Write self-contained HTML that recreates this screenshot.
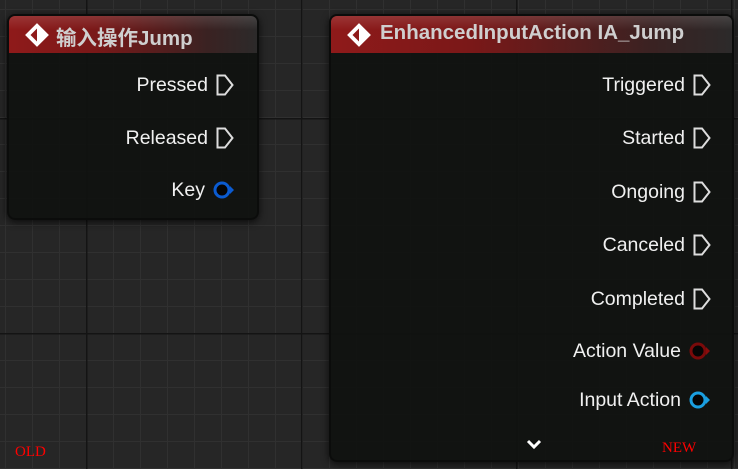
<!DOCTYPE html>
<html><head><meta charset="utf-8"><style>
*{margin:0;padding:0;box-sizing:border-box}
body{width:738px;height:469px;overflow:hidden;background-color:#262626;position:relative;font-family:"Liberation Sans","Noto Sans CJK SC",sans-serif;
background-image:
linear-gradient(to right,#141414 0,#141414 1.5px,transparent 1.5px),
linear-gradient(to bottom,#141414 0,#141414 1.5px,transparent 1.5px),
linear-gradient(to right,#303030 0,#303030 1px,transparent 1px),
linear-gradient(to bottom,#303030 0,#303030 1px,transparent 1px);
background-size:215px 215px,215px 215px,27px 27px,27px 27px;
background-position:86px 333px,86px 333px,86px 333px,86px 333px;}
.node{position:absolute;background:rgba(17,19,17,0.96);border-radius:8px;box-shadow:0 2px 8px rgba(0,0,0,0.7);border:2px solid #0b0c0b}
.hdr{position:absolute;left:0;right:0;top:0;height:37px;border-radius:6px 6px 0 0;background:linear-gradient(to right,#8f1a1a 0%,#7a1818 35%,#3a2222 80%,#2c2a2a 100%);}
.hdr::before{content:"";position:absolute;left:0;right:0;top:0;height:14px;border-radius:6px 6px 0 0;background:linear-gradient(to bottom,rgba(255,255,255,0.12),transparent)}
.ttl{position:absolute;left:47px;top:5px;color:#cfcfcf;font-weight:bold;font-size:20.5px;white-space:nowrap}
.ico{position:absolute;left:15px;top:6px}
.row{position:absolute;right:0;height:24px;display:flex;align-items:center;color:#f0f0f0;font-size:19.5px;white-space:nowrap}
.row svg{margin-left:8px}
.lbl{position:absolute;color:#ff0000;font-family:"Liberation Serif",serif;font-size:15px}
</style></head><body>
<div class="node" style="left:7px;top:14px;width:252px;height:206px">
 <div class="hdr"><svg class="ico" width="26" height="26" viewBox="0 0 24 24"><path d="M12 1 L23 12 L12 23 L1 12 Z" fill="#fff"/><path d="M12 6 L12 18 L6 12 Z" fill="#8f1a1a"/></svg><div class="ttl">输入操作Jump</div></div>
 <div class="row" style="top:57px;right:23px">Pressed<svg width="18" height="22" viewBox="0 0 18 22"><path d="M1.5 1.5 H9 L16.5 11 L9 20.5 H1.5 Z" fill="none" stroke="#ddd" stroke-width="2"/></svg></div>
 <div class="row" style="top:110px;right:23px">Released<svg width="18" height="22" viewBox="0 0 18 22"><path d="M1.5 1.5 H9 L16.5 11 L9 20.5 H1.5 Z" fill="none" stroke="#ddd" stroke-width="2"/></svg></div>
 <div class="row" style="top:162px;right:22px">Key<svg width="22" height="20" viewBox="0 0 22 20"><circle cx="9" cy="10" r="7" fill="#050505" stroke="#0b5bd0" stroke-width="3"/><path d="M17 6 L21 10 L17 14 Z" fill="#0b5bd0"/></svg></div>
</div>
<div class="node" style="left:329px;top:14px;width:405px;height:448px">
 <div class="hdr"><svg class="ico" width="26" height="26" viewBox="0 0 24 24"><path d="M12 1 L23 12 L12 23 L1 12 Z" fill="#fff"/><path d="M12 6 L12 18 L6 12 Z" fill="#8f1a1a"/></svg><div class="ttl" style="left:49px">EnhancedInputAction IA_Jump</div></div>
 <div class="row" style="top:57px;right:21px">Triggered<svg width="18" height="22" viewBox="0 0 18 22"><path d="M1.5 1.5 H9 L16.5 11 L9 20.5 H1.5 Z" fill="none" stroke="#ddd" stroke-width="2"/></svg></div>
 <div class="row" style="top:110px;right:21px">Started<svg width="18" height="22" viewBox="0 0 18 22"><path d="M1.5 1.5 H9 L16.5 11 L9 20.5 H1.5 Z" fill="none" stroke="#ddd" stroke-width="2"/></svg></div>
 <div class="row" style="top:164px;right:21px">Ongoing<svg width="18" height="22" viewBox="0 0 18 22"><path d="M1.5 1.5 H9 L16.5 11 L9 20.5 H1.5 Z" fill="none" stroke="#ddd" stroke-width="2"/></svg></div>
 <div class="row" style="top:217px;right:21px">Canceled<svg width="18" height="22" viewBox="0 0 18 22"><path d="M1.5 1.5 H9 L16.5 11 L9 20.5 H1.5 Z" fill="none" stroke="#ddd" stroke-width="2"/></svg></div>
 <div class="row" style="top:271px;right:21px">Completed<svg width="18" height="22" viewBox="0 0 18 22"><path d="M1.5 1.5 H9 L16.5 11 L9 20.5 H1.5 Z" fill="none" stroke="#ddd" stroke-width="2"/></svg></div>
 <div class="row" style="top:323px;right:21px">Action Value<svg width="22" height="20" viewBox="0 0 22 20"><circle cx="9" cy="10" r="7" fill="#050505" stroke="#7a0a0a" stroke-width="3"/><path d="M17 6 L21 10 L17 14 Z" fill="#8a0c0c"/></svg></div>
 <div class="row" style="top:372px;right:21px">Input Action<svg width="22" height="20" viewBox="0 0 22 20"><circle cx="9" cy="10" r="7" fill="#050505" stroke="#1a9fe0" stroke-width="3"/><path d="M17 6 L21 10 L17 14 Z" fill="#1a9fe0"/></svg></div>
 <svg style="position:absolute;left:195px;top:423px" width="16" height="11" viewBox="0 0 16 11"><path d="M2 2 L8 8 L14 2" fill="none" stroke="#fff" stroke-width="3"/></svg>
</div>
<div class="lbl" style="left:15px;top:444px">OLD</div>
<div class="lbl" style="left:662px;top:440px">NEW</div>
</body></html>
